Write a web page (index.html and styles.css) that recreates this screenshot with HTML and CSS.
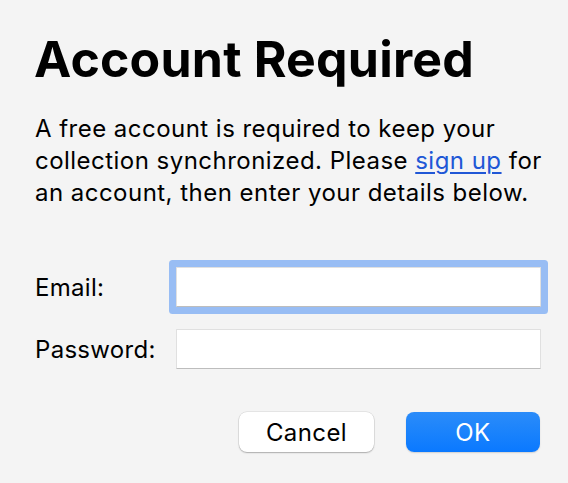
FILE: index.html
```html
<!DOCTYPE html>
<html>
<head>
<meta charset="utf-8">
<link rel="stylesheet" href="styles.css">
</head>
<body>
<div class="dialog">
  <h1 class="title">Account Required</h1>
  <p class="message">A free account is required to keep your collection synchronized. Please <a class="link" href="#">sign up</a> for an account, then enter your details below.</p>
  <div class="form">
    <label class="label" for="email">Email:</label>
    <input class="field focused" id="email" type="text">
    <label class="label" for="password">Password:</label>
    <input class="field" id="password" type="password">
  </div>
  <div class="actions">
    <button class="btn btn-cancel">Cancel</button>
    <button class="btn btn-ok">OK</button>
  </div>
</div>
</body>
</html>
```
FILE: styles.css
```css
html, body {
  margin: 0;
  padding: 0;
  background: #f4f4f4;
}
body {
  font-family: "Inter", "Noto Sans", sans-serif;
  color: #000;
  width: 568px;
  height: 483px;
  overflow: hidden;
}
.dialog {
  padding: 29px 27px 0 34px;
}
.title {
  margin: 0;
  font-size: 50px;
  line-height: 60px;
  font-weight: 700;
  letter-spacing: 0.2px;
}
.message {
  margin: 24px 0 0 1px;
  font-size: 24px;
  line-height: 32px;
  letter-spacing: 0.47px;
  width: 520px;
}
.link {
  color: #2057d6;
  text-decoration: underline;
  text-underline-offset: 3px;
  text-decoration-thickness: 1.5px;
}
.form {
  margin-top: 58px;
  display: grid;
  grid-template-columns: 142px 365px;
  row-gap: 22px;
  align-items: center;
}
.label {
  font-size: 24px;
  line-height: 38px;
  letter-spacing: 0.3px;
  padding: 2px 0 0 1px;
}
.field {
  box-sizing: border-box;
  width: 365px;
  height: 40px;
  margin: 0;
  padding: 0 6px;
  background: #fff;
  border: 1px solid #e0e0e0;
  border-bottom-color: #bdbdbd;
  border-radius: 1px;
  font-size: 20px;
  font-family: inherit;
  outline: none;
}
.focused {
  box-shadow: 0 0 0 7px #98bdf4;
}
.actions {
  margin-top: 43px;
  display: flex;
  justify-content: flex-end;
  gap: 32px;
  padding-right: 1px;
}
.btn {
  box-sizing: border-box;
  height: 40px;
  border: none;
  border-radius: 8px;
  font-family: inherit;
  font-size: 24px;
  letter-spacing: 0.4px;
  padding: 0;
}
.btn-cancel {
  width: 135px;
  background: #fff;
  color: #000;
  box-shadow: 0 0 0 0.5px rgba(0,0,0,0.12), 0 1px 1.5px rgba(0,0,0,0.25);
}
.btn-ok {
  width: 134px;
  background: linear-gradient(#2b8cf9, #0a79ff);
  color: #fff;
  box-shadow: 0 1px 1.5px rgba(0,0,0,0.15);
}
```
